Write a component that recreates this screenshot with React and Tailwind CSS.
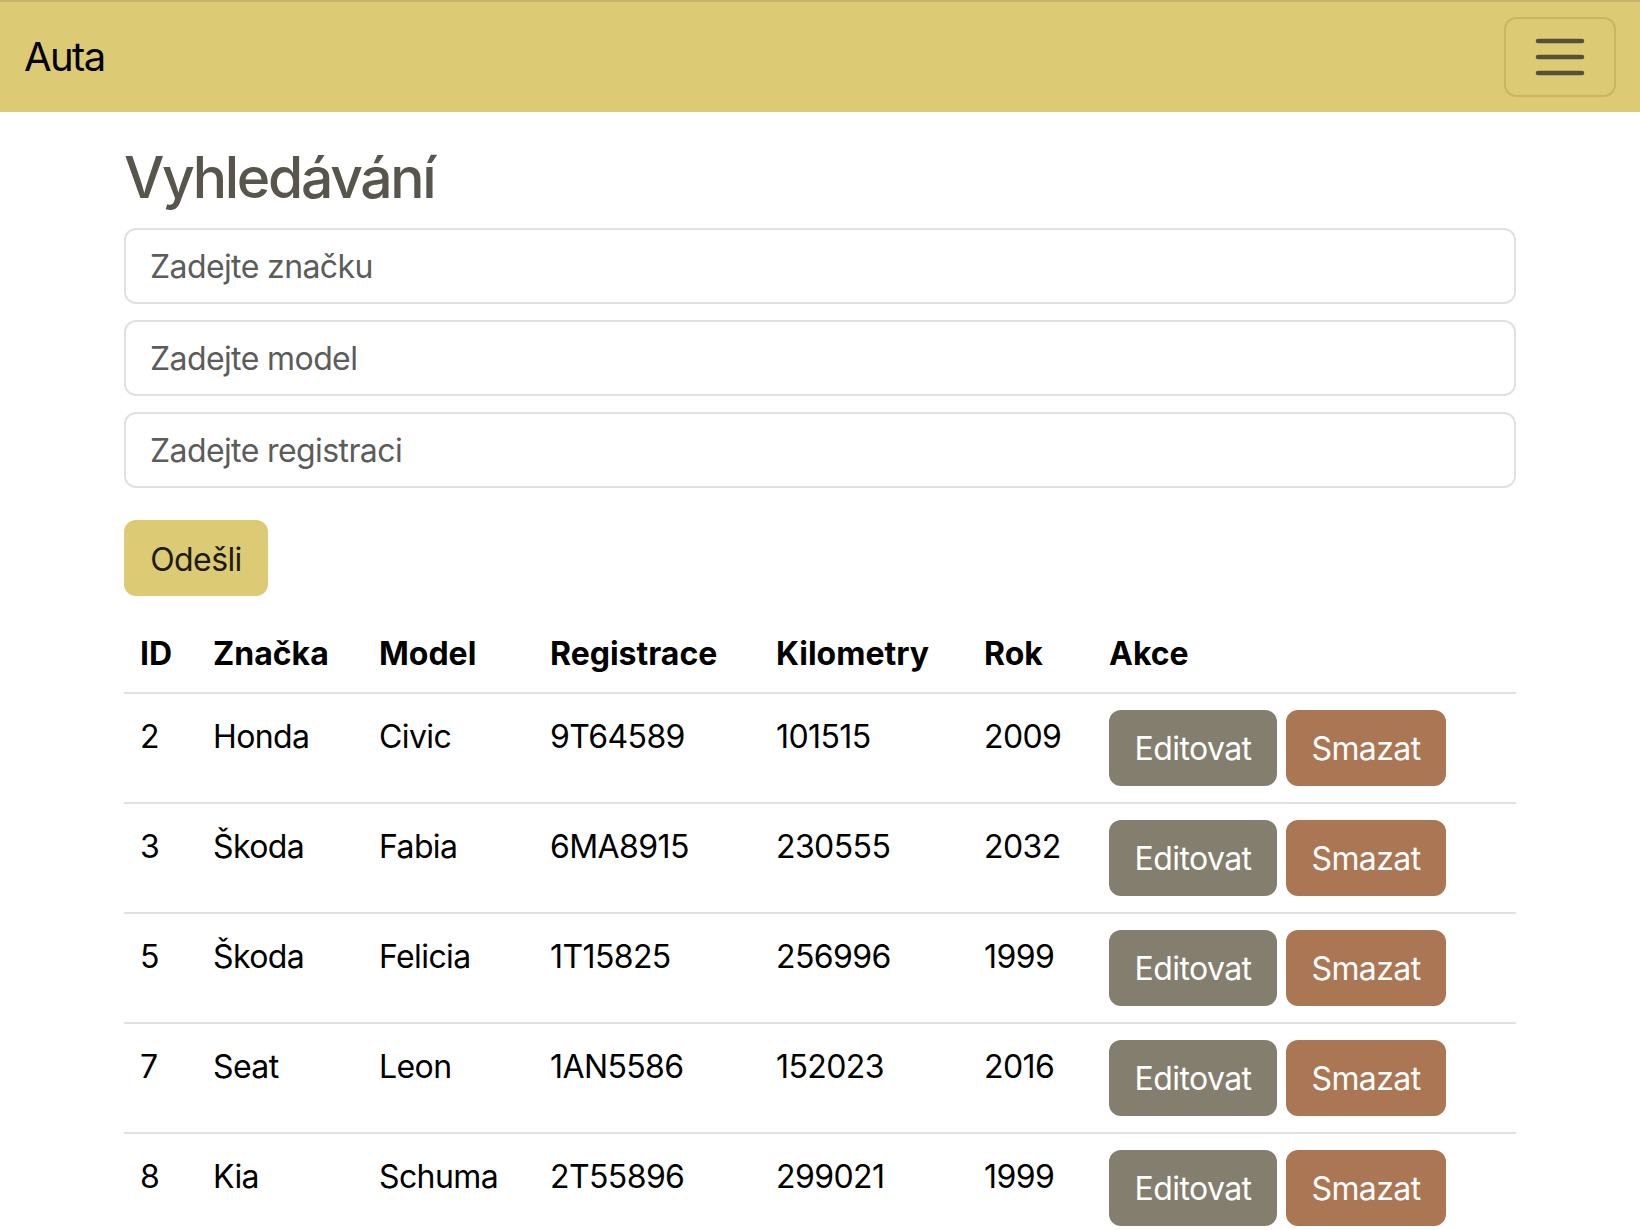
import React from 'react';

const cars = [
  { id: 2, brand: 'Honda', model: 'Civic', reg: '9T64589', km: '101515', year: '2009' },
  { id: 3, brand: 'Škoda', model: 'Fabia', reg: '6MA8915', km: '230555', year: '2032' },
  { id: 5, brand: 'Škoda', model: 'Felicia', reg: '1T15825', km: '256996', year: '1999' },
  { id: 7, brand: 'Seat', model: 'Leon', reg: '1AN5586', km: '152023', year: '2016' },
  { id: 8, brand: 'Kia', model: 'Schuma', reg: '2T55896', km: '299021', year: '1999' },
];

const th = 'px-4 pt-[18px] pb-[14px] text-left align-top font-bold tracking-normal';
const td = 'px-4 pt-[19px] pb-[13px] text-left align-top';

const App = () => {
  return (
    <div className="min-h-screen bg-white text-[32px] leading-[1.5] tracking-[-0.6px] text-black font-['Inter','Liberation_Sans',sans-serif]">
      <nav className="h-[112px] bg-[#ddca74] border-t-2 border-[#c4b46a] px-6 flex items-center justify-between">
        <span className="text-[40px] leading-[60px] tracking-[-1.6px] text-black">Auta</span>
        <button className="w-[112px] h-[80px] rounded-[12px] border-2 border-[#c9b562] flex items-center justify-center">
          <svg width="50" height="40" viewBox="0 0 50 40">
            <path d="M3 4h44M3 20h44M3 36h44" stroke="#555037" strokeWidth="4.5" strokeLinecap="round" />
          </svg>
        </button>
      </nav>

      <div className="w-[1440px] mx-auto px-6 mt-8">
        <h2 className="text-[57px] leading-[1.2] font-medium tracking-[-2.3px] text-[#58554c] mb-4">Vyhledávání</h2>

        <div className="space-y-4">
          <input className="block w-full h-[76px] px-6 border-2 border-[#dee2e6] rounded-[12px] placeholder:text-[#5c5c5c] outline-none" placeholder="Zadejte značku" />
          <input className="block w-full h-[76px] px-6 border-2 border-[#dee2e6] rounded-[12px] placeholder:text-[#5c5c5c] outline-none" placeholder="Zadejte model" />
          <input className="block w-full h-[76px] px-6 border-2 border-[#dee2e6] rounded-[12px] placeholder:text-[#5c5c5c] outline-none" placeholder="Zadejte registraci" />
        </div>

        <button className="mt-8 h-[76px] w-[144px] pt-[3px] rounded-[12px] bg-[#ddca74] text-[#1d1b12]">Odešli</button>

        <table className="mt-4 w-full border-collapse table-fixed">
          <colgroup>
            <col className="w-[73px]" />
            <col className="w-[166px]" />
            <col className="w-[171px]" />
            <col className="w-[226px]" />
            <col className="w-[208px]" />
            <col className="w-[125px]" />
            <col />
          </colgroup>
          <thead>
            <tr className="border-b-2 border-[#dee2e6]">
              <th className={th}>ID</th>
              <th className={th}>Značka</th>
              <th className={th}>Model</th>
              <th className={th}>Registrace</th>
              <th className={th}>Kilometry</th>
              <th className={th}>Rok</th>
              <th className={th}>Akce</th>
            </tr>
          </thead>
          <tbody>
            {cars.map((car) => (
              <tr key={car.id} className="border-b-2 border-[#dee2e6]">
                <td className={td}>{car.id}</td>
                <td className={td}>{car.brand}</td>
                <td className={td}>{car.model}</td>
                <td className={td}>{car.reg}</td>
                <td className={td}>{car.km}</td>
                <td className={td}>{car.year}</td>
                <td className="px-4 py-4 text-left align-top">
                  <div className="flex gap-[9px]">
                    <button className="h-[76px] w-[168px] pt-[2px] rounded-[12px] bg-[#847e6e] text-white">Editovat</button>
                    <button className="h-[76px] w-[160px] pt-[2px] rounded-[12px] bg-[#ab7653] text-white">Smazat</button>
                  </div>
                </td>
              </tr>
            ))}
          </tbody>
        </table>
      </div>
    </div>
  );
};

export default App;
